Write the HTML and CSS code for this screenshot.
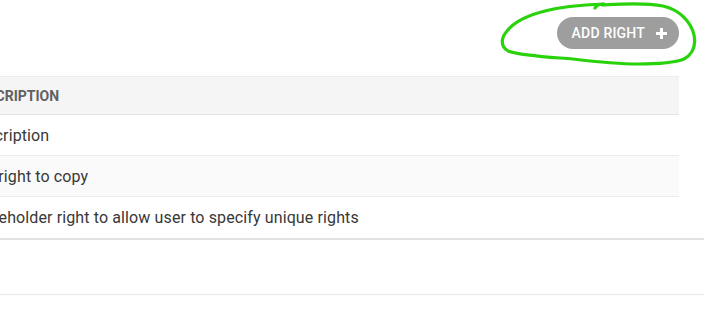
FILE: index.html
```html
<!DOCTYPE html>
<html lang="en">
<head>
  <meta charset="UTF-8" />
  <title>Rights</title>
  <link rel="stylesheet" href="styles.css">
</head>
<body>

  <div class="panel">
    <div class="toolbar">
      <button class="add-btn" type="button">
        ADD RIGHT
        <svg class="plus" width="13" height="13" viewBox="0 0 13 13"><path d="M6.5 1v11M1 6.5h11" stroke="#fff" stroke-width="3"/></svg>
      </button>
      <!-- hand drawn highlight round the button -->
      <svg class="scribble" width="222" height="70" viewBox="0 0 222 70">
        <path d="M97 8 C99 5 103 4 106 4 C82 5 62 7 47 11 C31 15 16 22 9 31 C3 38 2 46 10 51 C25 56 50 57 75 59 C100 62 120 64 140 64 C160 64 176 63 186 59 C195 54 198 45 196 35 C193 22 182 10 165 6 C145 2 122 4 104 5"
              fill="none" stroke="#2ad20b" stroke-width="3.2" stroke-linecap="round" stroke-linejoin="round"/>
      </svg>
    </div>

    <div class="table-wrap">
      <table class="rights">
        <thead>
          <tr><th>Description</th></tr>
        </thead>
        <tbody>
          <tr><td>Description</td></tr>
          <tr class="alt"><td>The right to copy</td></tr>
          <tr><td>Placeholder right to allow user to specify unique rights</td></tr>
        </tbody>
      </table>
    </div>

    <div class="table-foot"></div>
  </div>

</body>
</html>
```

FILE: styles.css
```css
* {
  margin: 0;
  padding: 0;
  box-sizing: border-box;
  font-family: Roboto, 'Liberation Sans', sans-serif;
}

body {
  background: #fff;
  overflow: hidden;
}

.panel {
  width: 737px;
  margin-left: -33px;
}

.toolbar {
  position: relative;
  width: 712px;
  height: 76px;
  display: flex;
  justify-content: flex-end;
  align-items: flex-start;
  padding-top: 17px;
}

.add-btn {
  display: flex;
  align-items: center;
  gap: 10px;
  height: 32px;
  padding: 0 11px 0 15px;
  border: none;
  border-radius: 16px;
  background: #9e9e9e;
  color: #fff;
  font-size: 14px;
  font-weight: 500;
  letter-spacing: 0.2px;
  cursor: pointer;
}

.scribble {
  position: absolute;
  left: 531px;
  top: 0;
}

.table-wrap {
  border-bottom: 2px solid #e2e2e2;
}

.rights {
  width: 712px;
  border-collapse: collapse;
}

.rights th {
  height: 38px;
  padding-left: 3px;
  text-align: left;
  font-size: 14px;
  font-weight: 700;
  color: #616161;
  text-transform: uppercase;
  background: #f5f5f5;
  border-top: 1px solid #ececec;
  border-bottom: 1px solid #e4e4e4;
}

.rights td {
  height: 41px;
  font-size: 16px;
  letter-spacing: 0.12px;
  color: #383838;
  border-bottom: 1px solid #ececec;
}

.rights tbody tr:last-child td {
  border-bottom: none;
}

.rights tr.alt td {
  background: #fafafa;
}

.table-foot {
  height: 55px;
  border-bottom: 1px solid #e8e8e8;
}
```
